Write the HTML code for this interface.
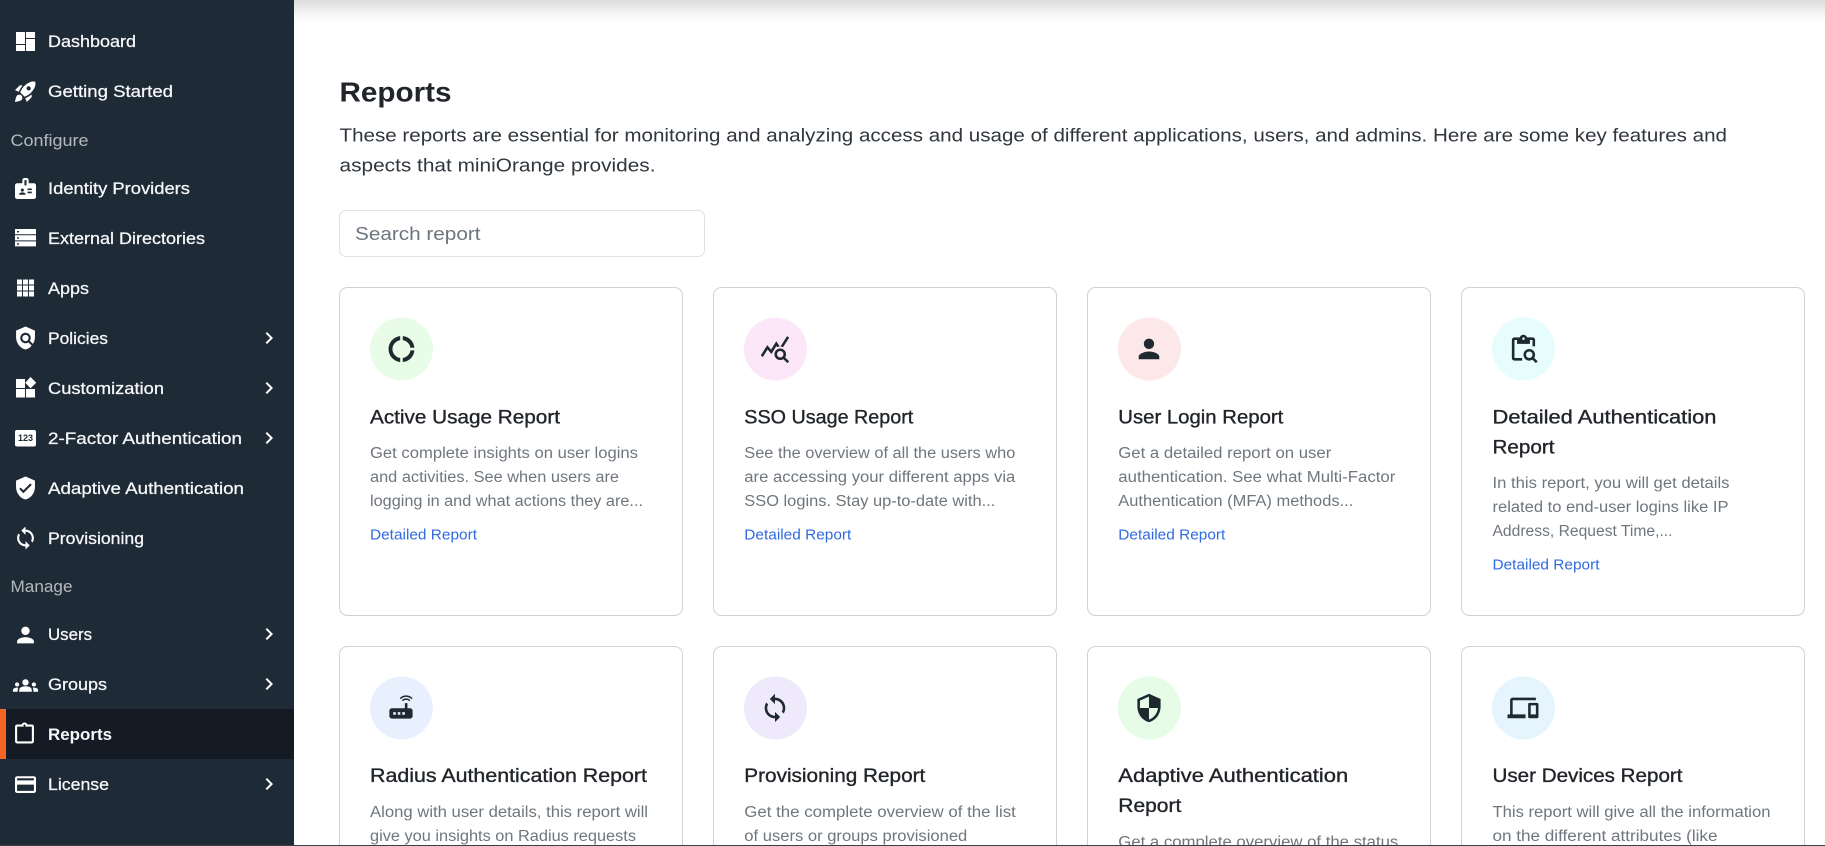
<!DOCTYPE html>
<html lang="en">
<head>
<meta charset="utf-8">
<title>Reports</title>
<style>
html,body{margin:0;padding:0;width:1825px;height:846px;overflow:hidden;background:#fff}
svg{display:block}
text{font-family:"Liberation Sans",sans-serif}
.n text{font-size:16.5px;fill:#f6f8fa;stroke:#f6f8fa;stroke-width:.25px}
.n text.s{fill:#b4b9be;stroke:none}
.i path,.i rect{fill:#fff}
.h{font-size:19.5px;fill:#212529;stroke:#212529;stroke-width:.35px}
.d{font-size:15.5px;fill:#6f767d}
.l{font-size:14.6px;fill:#2f6ae0}
.k path{fill:#1f2a30}
.c{fill:#fff;stroke:#cfd2d5;stroke-width:1}
</style>
</head>
<body>
<svg width="1825" height="846" viewBox="0 0 1825 846" xmlns="http://www.w3.org/2000/svg">
<defs>
<linearGradient id="top" x1="0" y1="0" x2="0" y2="1">
<stop offset="0" stop-color="#dcdcdc"/><stop offset=".35" stop-color="#ebebeb"/><stop offset=".75" stop-color="#fbfbfb"/><stop offset="1" stop-color="#fff"/>
</linearGradient>
</defs>
<rect width="1825" height="846" fill="#fff"/>
<rect x="294" y="0" width="1531" height="24" fill="url(#top)"/>

<!-- sidebar -->
<rect x="0" y="0" width="294" height="846" fill="#1f2a37"/>
<rect x="0" y="709" width="294" height="50" fill="#141b25"/>
<rect x="0" y="709" width="6" height="50" fill="#f26522"/>

<g class="n">
<text x="48" y="47" textLength="88" lengthAdjust="spacingAndGlyphs">Dashboard</text>
<text x="48" y="97" textLength="125" lengthAdjust="spacingAndGlyphs">Getting Started</text>
<text class="s" x="10.5" y="146" textLength="78" lengthAdjust="spacingAndGlyphs">Configure</text>
<text x="48" y="194" textLength="142" lengthAdjust="spacingAndGlyphs">Identity Providers</text>
<text x="48" y="244" textLength="157" lengthAdjust="spacingAndGlyphs">External Directories</text>
<text x="48" y="294" textLength="41" lengthAdjust="spacingAndGlyphs">Apps</text>
<text x="48" y="344" textLength="60" lengthAdjust="spacingAndGlyphs">Policies</text>
<text x="48" y="394" textLength="116" lengthAdjust="spacingAndGlyphs">Customization</text>
<text x="48" y="444" textLength="194" lengthAdjust="spacingAndGlyphs">2-Factor Authentication</text>
<text x="48" y="494" textLength="196" lengthAdjust="spacingAndGlyphs">Adaptive Authentication</text>
<text x="48" y="544" textLength="96" lengthAdjust="spacingAndGlyphs">Provisioning</text>
<text class="s" x="10.5" y="592" textLength="62" lengthAdjust="spacingAndGlyphs">Manage</text>
<text x="48" y="640" textLength="44" lengthAdjust="spacingAndGlyphs">Users</text>
<text x="48" y="690" textLength="59" lengthAdjust="spacingAndGlyphs">Groups</text>
<text x="48" y="740" textLength="64" lengthAdjust="spacingAndGlyphs" style="font-weight:bold;stroke:none">Reports</text>
<text x="48" y="790" textLength="61" lengthAdjust="spacingAndGlyphs">License</text>
</g>

<g class="i" fill-rule="evenodd">
<!-- dashboard -->
<rect x="16" y="32" width="9" height="12"/><rect x="16" y="45" width="9" height="6"/><rect x="26" y="32" width="9" height="6"/><rect x="26" y="39" width="9" height="12"/>
<path transform="translate(12.9 78.9) scale(1.05)" d="M9.19 6.35c-2.04 2.29-3.44 5.58-3.57 5.89L2 10.69l4.05-4.05c.47-.47 1.15-.68 1.81-.55l1.33.26zM11.17 17s3.74-1.55 5.89-3.7c5.4-5.4 4.5-9.62 4.21-10.57-.95-.3-5.17-1.19-10.57 4.21C8.55 9.09 7 12.83 7 12.83L11.17 17zm6.48-2.19c-2.29 2.04-5.58 3.44-5.89 3.57L13.31 22l4.05-4.05c.47-.47.68-1.15.55-1.81l-.26-1.33zM9 18c0 .83-.34 1.58-.88 2.12C6.94 21.3 2 22 2 22s.7-4.94 1.88-6.12C4.42 15.34 5.17 15 6 15c1.66 0 3 1.34 3 3zm4-9c0-1.1.9-2 2-2s2 .9 2 2-.9 2-2 2-2-.9-2-2z"/>
<path transform="translate(12.9 175.9) scale(1.05)" d="M20 7h-5V4c0-1.1-.9-2-2-2h-2c-1.1 0-2 .9-2 2v3H4c-1.1 0-2 .9-2 2v11c0 1.1.9 2 2 2h16c1.1 0 2-.9 2-2V9c0-1.1-.9-2-2-2zM9 12c.83 0 1.5.67 1.5 1.5S9.83 15 9 15s-1.5-.67-1.5-1.5S8.17 12 9 12zm3 6H6v-.75c0-1 2-1.5 3-1.5s3 .5 3 1.5V18zm1-9h-2V4h2v5zm5 7.5h-4V15h4v1.5zm0-3h-4V12h4v1.5z"/>
<!-- storage -->
<path d="M15 229h21v5.2H15zM17 231v1.4h2V231zM15 235.2h21v5.2H15zM17 237.2v1.4h2v-1.4zM15 241.4h21v5H15zM17 243.2v1.4h2v-1.4z"/>
<!-- apps -->
<path d="M17 279.5h5v5h-5zM23 279.5h5v5h-5zM29 279.5h5v5h-5zM17 285.5h5v5h-5zM23 285.5h5v5h-5zM29 285.5h5v5h-5zM17 291.5h5v5h-5zM23 291.5h5v5h-5zM29 291.5h5v5h-5z"/>
<g transform="translate(12.9 325.4) scale(1.05)">
<path d="M21,5l-9-4L3,5v6c0,5.55,3.84,10.74,9,12c2.3-0.56,4.33-1.9,5.88-3.71l-3.12-3.12c-1.94,1.29-4.58,1.07-6.29-0.64c-1.95-1.95-1.95-5.12,0-7.07c1.95-1.95,5.12-1.95,7.07,0c1.71,1.71,1.92,4.35,0.64,6.29l2.9,2.9C20.29,15.69,21,13.38,21,11V5z"/>
<path d="M12 9a3 3 0 1 0 0 6a3 3 0 1 0 0-6z"/>
</g>
<!-- widgets -->
<rect x="16" y="379" width="9" height="9"/><rect x="16" y="389" width="9" height="8.5"/><rect x="26" y="389" width="9" height="8.5"/>
<path d="M30.5 377l5.7 5.7-5.7 5.7-5.2-5.7z"/>
<rect x="15" y="430" width="21" height="16.5" rx="2"/>
<path transform="translate(12.9 475.4) scale(1.05)" d="M12 1L3 5v6c0 5.55 3.84 10.74 9 12 5.16-1.26 9-6.45 9-12V5l-9-4zm-2 16l-4-4 1.41-1.41L10 14.17l6.59-6.59L18 9l-8 8z"/>
<path transform="translate(12.9 525.4) scale(1.05)" d="M12 4V1L8 5l4 4V6c3.31 0 6 2.69 6 6 0 1.01-.25 1.97-.7 2.8l1.46 1.46C19.54 15.03 20 13.57 20 12c0-4.42-3.58-8-8-8zm0 14c-3.31 0-6-2.69-6-6 0-1.01.25-1.97.7-2.8L5.24 7.74C4.46 8.97 4 10.43 4 12c0 4.42 3.58 8 8 8v3l4-4-4-4v3z"/>
<path transform="translate(12.9 622.4) scale(1.05)" d="M12 12c2.21 0 4-1.79 4-4s-1.79-4-4-4-4 1.79-4 4 1.79 4 4 4zm0 2c-2.67 0-8 1.34-8 4v2h16v-2c0-2.66-5.33-4-8-4z"/>
<path transform="translate(12.9 672.9) scale(1.05)" d="M12 12.75c1.63 0 3.07.39 4.24.9 1.08.48 1.76 1.56 1.76 2.73V18H6v-1.61c0-1.18.68-2.26 1.76-2.73 1.17-.52 2.61-.91 4.24-.91zM4 13c1.1 0 2-.9 2-2s-.9-2-2-2-2 .9-2 2 .9 2 2 2zm1.13 1.1c-.37-.06-.74-.1-1.13-.1-.99 0-1.93.21-2.78.58C.48 14.9 0 15.62 0 16.43V18h4.5v-1.61c0-.83.23-1.61.63-2.29zM20 13c1.1 0 2-.9 2-2s-.9-2-2-2-2 .9-2 2 .9 2 2 2zm4 3.43c0-.81-.48-1.53-1.22-1.85-.85-.37-1.79-.58-2.78-.58-.39 0-.76.04-1.13.1.4.68.63 1.46.63 2.29V18H24v-1.57zM12 6c1.66 0 3 1.34 3 3s-1.34 3-3 3-3-1.34-3-3 1.34-3 3-3z"/>
<path transform="translate(11.9 721.4) scale(1.05)" d="M19 3h-4.18C14.4 1.84 13.3 1 12 1c-1.3 0-2.4.84-2.82 2H5c-1.1 0-2 .9-2 2v14c0 1.1.9 2 2 2h14c1.1 0 2-.9 2-2V5c0-1.1-.9-2-2-2zm-7 0c.55 0 1 .45 1 1s-.45 1-1 1-1-.45-1-1 .45-1 1-1zm7 16H5V5h14v14z"/>
<path transform="translate(12.9 772) scale(1.05)" d="M20 4H4c-1.11 0-1.99.89-1.99 2L2 18c0 1.11.89 2 2 2h16c1.11 0 2-.89 2-2V6c0-1.11-.89-2-2-2zm0 14H4v-6h16v6zm0-10H4V6h16v2z"/>
</g>
<text x="25.5" y="441.2" text-anchor="middle" font-size="9" font-weight="bold" fill="#1f2a37" textLength="15" lengthAdjust="spacingAndGlyphs">123</text>

<g fill="#fff">
<path transform="translate(257 326)" d="M10 6L8.59 7.41 13.17 12l-4.58 4.59L10 18l6-6z"/>
<path transform="translate(257 376)" d="M10 6L8.59 7.41 13.17 12l-4.58 4.59L10 18l6-6z"/>
<path transform="translate(257 426)" d="M10 6L8.59 7.41 13.17 12l-4.58 4.59L10 18l6-6z"/>
<path transform="translate(257 622)" d="M10 6L8.59 7.41 13.17 12l-4.58 4.59L10 18l6-6z"/>
<path transform="translate(257 672)" d="M10 6L8.59 7.41 13.17 12l-4.58 4.59L10 18l6-6z"/>
<path transform="translate(257 772)" d="M10 6L8.59 7.41 13.17 12l-4.58 4.59L10 18l6-6z"/>
</g>

<!-- header -->
<text x="339.5" y="101.5" font-size="28" font-weight="bold" fill="#212529" textLength="112" lengthAdjust="spacingAndGlyphs">Reports</text>
<text x="339.5" y="141.7" font-size="18.5" fill="#2f363d" textLength="1387.5" lengthAdjust="spacingAndGlyphs">These reports are essential for monitoring and analyzing access and usage of different applications, users, and admins. Here are some key features and</text>
<text x="339.5" y="171.7" font-size="18.5" fill="#2f363d" textLength="316" lengthAdjust="spacingAndGlyphs">aspects that miniOrange provides.</text>

<rect x="339.5" y="210.5" width="365" height="46" rx="6.5" fill="#fff" stroke="#dee2e6"/>
<text x="355" y="240" font-size="18.5" fill="#6c757d" textLength="125.5" lengthAdjust="spacingAndGlyphs">Search report</text>

<!-- cards row 1 -->
<rect class="c" x="339.5" y="287.5" width="343" height="328" rx="8"/>
<rect class="c" x="713.5" y="287.5" width="343" height="328" rx="8"/>
<rect class="c" x="1087.5" y="287.5" width="343" height="328" rx="8"/>
<rect class="c" x="1461.5" y="287.5" width="343" height="328" rx="8"/>
<!-- cards row 2 (cut off by the frame) -->
<path class="c" d="M339.5 846V654.5a8 8 0 0 1 8-8h327a8 8 0 0 1 8 8V846"/>
<path class="c" d="M713.5 846V654.5a8 8 0 0 1 8-8h327a8 8 0 0 1 8 8V846"/>
<path class="c" d="M1087.5 846V654.5a8 8 0 0 1 8-8h327a8 8 0 0 1 8 8V846"/>
<path class="c" d="M1461.5 846V654.5a8 8 0 0 1 8-8h327a8 8 0 0 1 8 8V846"/>

<circle cx="401.5" cy="349" r="31.5" fill="#e8fce8"/>
<circle cx="775.5" cy="349" r="31.5" fill="#fce7fa"/>
<circle cx="1149.5" cy="349" r="31.5" fill="#fce7e9"/>
<circle cx="1523.5" cy="349" r="31.5" fill="#e7fcfd"/>
<circle cx="401.5" cy="708" r="31.5" fill="#e8effd"/>
<circle cx="775.5" cy="708" r="31.5" fill="#efe9fc"/>
<circle cx="1149.5" cy="708" r="31.5" fill="#e6fce6"/>
<circle cx="1523.5" cy="708" r="31.5" fill="#e6f4fe"/>

<g class="k">
<path transform="translate(386 333.6) scale(1.29)" d="M11 5.08V2c-5 .5-9 4.81-9 10s4 9.5 9 10v-3.08c-3-.48-6-3.23-6-6.92s3-6.44 6-6.92zM18.97 11H22c-.47-5-4-8.53-9-9v3.08C16 5.51 18.54 8 18.97 11zM13 18.92V22c5-.47 8.53-4 9-9h-3.03c-.43 3-2.97 5.49-5.97 5.92z"/>
<path transform="translate(759.5 333.5) scale(1.29)" d="M19.88 18.47c.44-.7.7-1.51.7-2.39 0-2.49-2.01-4.5-4.5-4.5s-4.5 2.01-4.5 4.5 2.01 4.5 4.49 4.5c.88 0 1.7-.26 2.39-.7L21.58 23 23 21.58l-3.12-3.11zm-3.8.11c-1.38 0-2.5-1.12-2.5-2.5s1.12-2.5 2.5-2.5 2.5 1.12 2.5 2.5-1.12 2.5-2.5 2.5zm-.36-8.5c-.74.02-1.45.18-2.1.45l-.55-.83-3.8 6.18-3.01-3.52-3.63 5.81L1 17l5-8 3 3.5L13 6l2.72 4.08zm2.59.5c-.64-.28-1.33-.45-2.05-.49L21.38 2 23 3.18l-4.69 7.4z"/>
<path transform="translate(1133.5 333.5) scale(1.29)" d="M12 12c2.21 0 4-1.79 4-4s-1.79-4-4-4-4 1.79-4 4 1.79 4 4 4zm0 2c-2.67 0-8 1.34-8 4v2h16v-2c0-2.66-5.33-4-8-4z"/>
<g transform="translate(1508 333.5) scale(1.29)">
<path d="M5 5h2v3h10V5h2v5h2V5c0-1.1-.9-2-2-2h-4.18C14.4 1.84 13.3 1 12 1S9.6 1.84 9.18 3H5c-1.1 0-2 .9-2 2v14c0 1.1.9 2 2 2h6v-2H5V5zm7-2c.55 0 1 .45 1 1s-.45 1-1 1-1-.45-1-1 .45-1 1-1z"/>
<path d="M20.3 18.9c.4-.7.7-1.5.7-2.4 0-2.5-2-4.5-4.5-4.5S12 14 12 16.5s2 4.5 4.5 4.5c.9 0 1.7-.3 2.4-.7l2.7 2.7 1.4-1.4-2.7-2.7zm-3.8.1c-1.4 0-2.5-1.1-2.5-2.5s1.1-2.5 2.5-2.5 2.5 1.1 2.5 2.5-1.1 2.5-2.5 2.5z"/>
</g>
<path transform="translate(385.5 691.5) scale(1.29)" d="M20.2 5.9l.8-.8C19.6 3.7 17.8 3 16 3s-3.6.7-5 2.1l.8.8C13 4.8 14.5 4.2 16 4.2s3 .6 4.2 1.7zm-.9.8c-.9-.9-2.1-1.4-3.3-1.4s-2.4.5-3.3 1.4l.8.8c.7-.7 1.6-1 2.5-1 .9 0 1.8.3 2.5 1l.8-.8zM19 13h-2V9h-2v4H5c-1.1 0-2 .9-2 2v4c0 1.1.9 2 2 2h14c1.1 0 2-.9 2-2v-4c0-1.1-.9-2-2-2zM8 18H6v-2h2v2zm3.5 0h-2v-2h2v2zm3.5 0h-2v-2h2v2z"/>
<path transform="translate(759.5 692.5) scale(1.29)" d="M12 4V1L8 5l4 4V6c3.31 0 6 2.69 6 6 0 1.01-.25 1.97-.7 2.8l1.46 1.46C19.54 15.03 20 13.57 20 12c0-4.42-3.58-8-8-8zm0 14c-3.31 0-6-2.69-6-6 0-1.01.25-1.97.7-2.8L5.24 7.74C4.46 8.97 4 10.43 4 12c0 4.42 3.58 8 8 8v3l4-4-4-4v3z"/>
<path transform="translate(1133.5 692.5) scale(1.29)" d="M12 1L3 5v6c0 5.55 3.84 10.74 9 12 5.16-1.26 9-6.45 9-12V5l-9-4zm0 10.99h7c-.53 4.12-3.28 7.79-7 8.94V12H5V6.3l7-3.11v8.8z"/>
<path transform="translate(1507.5 692.5) scale(1.29)" d="M4 6h18V4H4c-1.1 0-2 .9-2 2v11H0v3h14v-3H4V6zm19 2h-6c-.55 0-1 .45-1 1v10c0 .55.45 1 1 1h6c.55 0 1-.45 1-1V9c0-.55-.45-1-1-1zm-1 9h-4v-7h4v7z"/>
</g>

<!-- card 1 -->
<text class="h" x="370" y="423.3" textLength="190" lengthAdjust="spacingAndGlyphs">Active Usage Report</text>
<text class="d" x="370" y="458" textLength="268" lengthAdjust="spacingAndGlyphs">Get complete insights on user logins</text>
<text class="d" x="370" y="482" textLength="249" lengthAdjust="spacingAndGlyphs">and activities. See when users are</text>
<text class="d" x="370" y="506" textLength="273" lengthAdjust="spacingAndGlyphs">logging in and what actions they are...</text>
<text class="l" x="370" y="539.3" textLength="107" lengthAdjust="spacingAndGlyphs">Detailed Report</text>

<!-- card 2 -->
<text class="h" x="744.3" y="423.3" textLength="169" lengthAdjust="spacingAndGlyphs">SSO Usage Report</text>
<text class="d" x="744.3" y="458" textLength="271" lengthAdjust="spacingAndGlyphs">See the overview of all the users who</text>
<text class="d" x="744.3" y="482" textLength="271" lengthAdjust="spacingAndGlyphs">are accessing your different apps via</text>
<text class="d" x="744.3" y="506" textLength="251" lengthAdjust="spacingAndGlyphs">SSO logins. Stay up-to-date with...</text>
<text class="l" x="744.3" y="539.3" textLength="107" lengthAdjust="spacingAndGlyphs">Detailed Report</text>

<!-- card 3 -->
<text class="h" x="1118.3" y="423.3" textLength="165" lengthAdjust="spacingAndGlyphs">User Login Report</text>
<text class="d" x="1118.3" y="458" textLength="213" lengthAdjust="spacingAndGlyphs">Get a detailed report on user</text>
<text class="d" x="1118.3" y="482" textLength="277" lengthAdjust="spacingAndGlyphs">authentication. See what Multi-Factor</text>
<text class="d" x="1118.3" y="506" textLength="235" lengthAdjust="spacingAndGlyphs">Authentication (MFA) methods...</text>
<text class="l" x="1118.3" y="539.3" textLength="107" lengthAdjust="spacingAndGlyphs">Detailed Report</text>

<!-- card 4 -->
<text class="h" x="1492.5" y="423.3" textLength="224" lengthAdjust="spacingAndGlyphs">Detailed Authentication</text>
<text class="h" x="1492.5" y="453.3" textLength="62" lengthAdjust="spacingAndGlyphs">Report</text>
<text class="d" x="1492.5" y="488" textLength="237" lengthAdjust="spacingAndGlyphs">In this report, you will get details</text>
<text class="d" x="1492.5" y="512" textLength="236" lengthAdjust="spacingAndGlyphs">related to end-user logins like IP</text>
<text class="d" x="1492.5" y="536" textLength="180" lengthAdjust="spacingAndGlyphs">Address, Request Time,...</text>
<text class="l" x="1492.5" y="569.3" textLength="107" lengthAdjust="spacingAndGlyphs">Detailed Report</text>

<!-- row 2 -->
<text class="h" x="370" y="782" textLength="277" lengthAdjust="spacingAndGlyphs">Radius Authentication Report</text>
<text class="d" x="370" y="817" textLength="278" lengthAdjust="spacingAndGlyphs">Along with user details, this report will</text>
<text class="d" x="370" y="841" textLength="266" lengthAdjust="spacingAndGlyphs">give you insights on Radius requests</text>

<text class="h" x="744.3" y="782" textLength="181" lengthAdjust="spacingAndGlyphs">Provisioning Report</text>
<text class="d" x="744.3" y="817" textLength="271.5" lengthAdjust="spacingAndGlyphs">Get the complete overview of the list</text>
<text class="d" x="744.3" y="841" textLength="223" lengthAdjust="spacingAndGlyphs">of users or groups provisioned</text>

<text class="h" x="1118.3" y="782" textLength="230" lengthAdjust="spacingAndGlyphs">Adaptive Authentication</text>
<text class="h" x="1118.3" y="812" textLength="63" lengthAdjust="spacingAndGlyphs">Report</text>
<text class="d" x="1118.3" y="847" textLength="280" lengthAdjust="spacingAndGlyphs">Get a complete overview of the status</text>

<text class="h" x="1492.5" y="782" textLength="190" lengthAdjust="spacingAndGlyphs">User Devices Report</text>
<text class="d" x="1492.5" y="817" textLength="278" lengthAdjust="spacingAndGlyphs">This report will give all the information</text>
<text class="d" x="1492.5" y="841" textLength="225" lengthAdjust="spacingAndGlyphs">on the different attributes (like</text>

<rect x="0" y="845" width="1825" height="1" fill="#3a3f45"/>
</svg>
</body>
</html>
